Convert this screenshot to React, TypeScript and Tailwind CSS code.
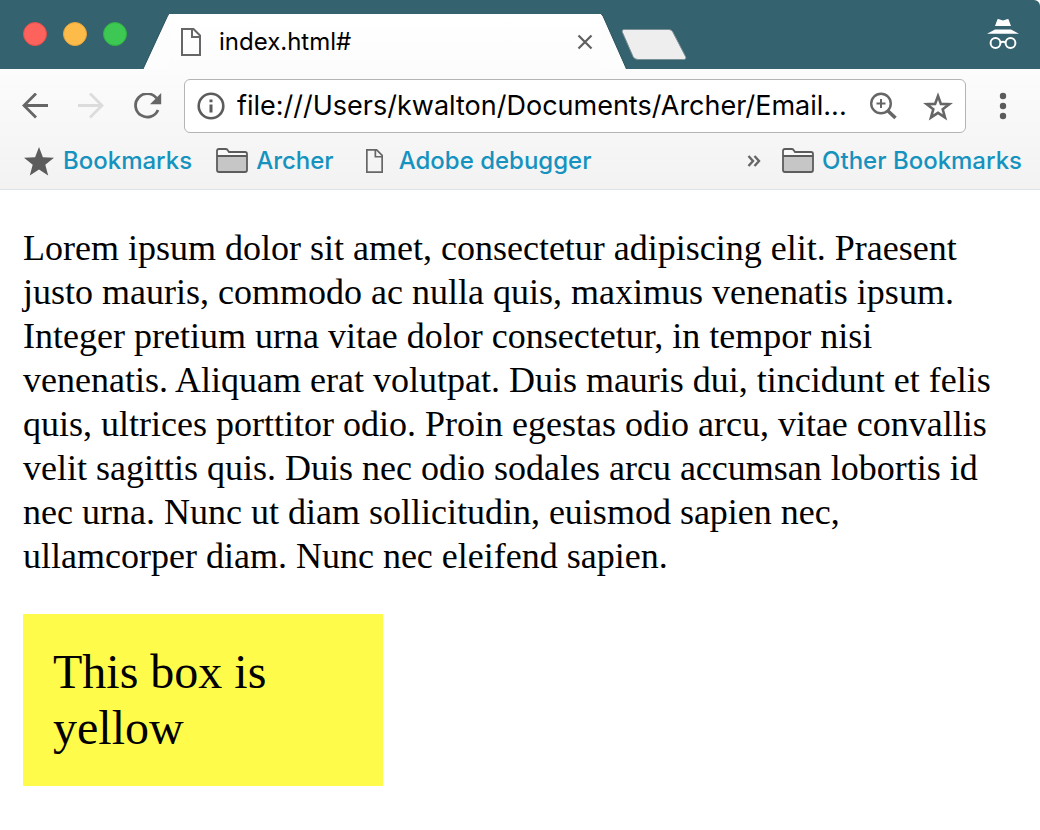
import React from "react";

function PageIcon({ className }: { className: string }) {
  return (
    <svg viewBox="0 0 20 28" fill="none" stroke="#666" strokeWidth="2" className={className} aria-hidden="true">
      <path d="M1 1H12.5L19 7.5V27H1Z" />
      <path d="M11 1V9H19" />
    </svg>
  );
}

function FolderIcon() {
  return (
    <svg viewBox="0 0 32 26" className="h-[26px] w-8 shrink-0" aria-hidden="true">
      <path d="M1 7.500H31V22Q31 24 29 24H3Q1 24 1 22Z" fill="#c6c6c6" />
      <path d="M1 3Q1 1 3 1H10L13 4H29Q31 4 31 6V7.500H1Z" fill="#fafafa" />
      <path
        d="M1 22V3Q1 1 3 1H9.500Q11 1 11.600 2L13 4H29Q31 4 31 6V22Q31 24 29 24H3Q1 24 1 22ZM1 8H31"
        fill="none"
        stroke="#5c5c5c"
        strokeWidth="1.800"
      />
    </svg>
  );
}

const starPath = "M15 0L18.900 10.300L30 10.800L21.300 17.700L24.200 28.500L15 22.400L5.800 28.500L8.700 17.700L0 10.800L11.100 10.300Z";

function TabStrip() {
  return (
    <div className="flex h-[69px] items-end bg-[#34626e]">
      <div className="flex w-[143px] shrink-0 gap-4 self-stretch pt-[22px] pl-[23px]">
        <button aria-label="Close window" className="size-6 rounded-full border border-[#e2504b] bg-[#fd625c]" />
        <button aria-label="Minimize window" className="size-6 rounded-full border border-[#e5a33c] bg-[#fdbc4a]" />
        <button aria-label="Zoom window" className="size-6 rounded-full border border-[#2fb241] bg-[#3cc852]" />
      </div>
      <div className="flex h-[55px] w-[484px]">
        <svg viewBox="0 0 26 55" className="h-full w-[26px] shrink-0" aria-hidden="true">
          <path d="M0 55L24.500 2Q25.400 0 27 0V55Z" fill="#fdfdfd" />
          <path d="M0 55L24.500 2Q25.400 0 27 0" fill="none" stroke="#28525d" />
        </svg>
        <div className="flex min-w-0 flex-1 items-center bg-linear-to-b from-white to-[#fcfcfc] pl-3">
          <PageIcon className="h-7 w-5 shrink-0" />
          <span className="ml-[18px] flex-1 text-2xl leading-8 whitespace-nowrap">index.html#</span>
          <button aria-label="Close tab" className="mr-2 grid size-4">
            <svg viewBox="0 0 16 16" stroke="#5f5f5f" strokeWidth="2.200" aria-hidden="true">
              <path d="M1.500 1.500L14.500 14.500M14.500 1.500L1.500 14.500" />
            </svg>
          </button>
        </div>
        <svg viewBox="0 0 26 55" className="h-full w-[26px] shrink-0" aria-hidden="true">
          <path d="M-1 0Q1 0 2 2L25.500 55H-1Z" fill="#fdfdfd" />
          <path d="M-1 0Q1 0 2 2L25.500 55" fill="none" stroke="#28525d" />
        </svg>
      </div>
      <button aria-label="New tab" className="mb-2 -ml-[7px]">
        <svg viewBox="0 0 68 32" className="h-8 w-[68px]" aria-hidden="true">
          <path
            d="M4.500 0.500H49Q51.500 0.500 52.800 3L65.500 27.500Q66.800 30.500 63.500 30.500H18Q14.500 30.500 13 27.500L2.500 3.500Q1.300 0.500 4.500 0.500Z"
            fill="#eee"
            stroke="#7b9096"
          />
        </svg>
      </button>
      <div className="ml-auto self-stretch pt-[19px] pr-[21px]">
        <svg viewBox="0 0 32 30" className="h-[30px] w-8" aria-label="Incognito" role="img">
          <path d="M10.500 0.300Q11 -0.200 12 0.200L16 1.500L20 0.200Q21 -0.200 21.500 0.300L24 7H8Z" fill="#fff" />
          <path d="M8 10.500H24L32 14.800H0Z" fill="#fff" />
          <g fill="none" stroke="#fff" strokeWidth="2">
            <circle cx="8.500" cy="24" r="4.900" />
            <circle cx="23.500" cy="24" r="4.900" />
            <path d="M13.300 23.500Q16 22 18.700 23.500" />
          </g>
        </svg>
      </div>
    </div>
  );
}

function Toolbar() {
  return (
    <div className="flex items-center pt-[10px] pr-[33px] pl-[22px]">
      <button aria-label="Back">
        <svg viewBox="0 0 26 26" className="size-[26px]" fill="none" stroke="#666" strokeWidth="2.800" aria-hidden="true">
          <path d="M26 12.500H2M14 0.500L2 12.500L14 24.500" />
        </svg>
      </button>
      <button aria-label="Forward" className="ml-[30px]">
        <svg viewBox="0 0 26 26" className="size-[26px]" fill="none" stroke="#dcdcdc" strokeWidth="2.800" aria-hidden="true">
          <path d="M0 12.500H24M12 0.500L24 12.500L12 24.500" />
        </svg>
      </button>
      <button aria-label="Reload" className="ml-[30px]">
        <svg viewBox="0 0 28 26" className="h-[26px] w-7" aria-hidden="true">
          <path d="M22.500 5.200A11.700 11.700 0 1 0 24 17" fill="none" stroke="#666" strokeWidth="2.800" />
          <path d="M27.200 0V11.300H16Z" fill="#666" />
        </svg>
      </button>
      <div className="ml-[22px] flex h-[54px] min-w-0 flex-1 items-center rounded-md border border-[#b4b4b4] bg-white px-3">
        <svg viewBox="0 0 28 28" className="size-7 shrink-0" aria-hidden="true">
          <circle cx="14" cy="14" r="12.300" fill="none" stroke="#5c5c5c" strokeWidth="2.600" />
          <path d="M12.500 7.500H15.500V10.300H12.500ZM12.500 12.500H15.500V20.500H12.500Z" fill="#5c5c5c" />
        </svg>
        <input
          aria-label="Address"
          className="ml-3 min-w-0 flex-1 bg-transparent text-[27px] leading-8 outline-none"
          defaultValue="file:///Users/kwalton/Documents/Archer/Email..."
        />
        <button aria-label="Zoom">
          <svg viewBox="0 0 28 28" className="size-7" fill="none" stroke="#666" aria-hidden="true">
            <circle cx="12" cy="11.500" r="9.800" strokeWidth="2.400" />
            <path d="M12 7V16M7.500 11.500H16.500" strokeWidth="2" />
            <path d="M18.500 18.500L26.500 26" strokeWidth="3.600" />
          </svg>
        </button>
        <button aria-label="Bookmark this page" className="ml-[26px]">
          <svg viewBox="0 0 30 29" className="h-[29px] w-[30px]" aria-hidden="true">
            <path
              d="M15 4L17.900 11.900L26.300 12.200L19.700 17.300L22 25.400L15 20.800L8 25.400L10.300 17.300L3.700 12.200L12.100 11.900Z"
              fill="none"
              stroke="#666"
              strokeWidth="2.600"
            />
          </svg>
        </button>
      </div>
      <button aria-label="Menu" className="ml-[33px]">
        <svg viewBox="0 0 8 28" className="h-7 w-2" fill="#5c5c5c" aria-hidden="true">
          <circle cx="4" cy="4" r="3.200" />
          <circle cx="4" cy="14" r="3.200" />
          <circle cx="4" cy="24" r="3.200" />
        </svg>
      </button>
    </div>
  );
}

function BookmarksBar() {
  return (
    <nav className="flex h-14 items-center pr-[18px] pl-6 text-2xl leading-8 font-medium whitespace-nowrap text-[#1692bf]">
      <a href="#bookmarks" className="flex items-center gap-[9px]">
        <svg viewBox="0 0 30 29" className="h-[29px] w-[30px]" fill="#5c5c5c" aria-hidden="true">
          <path d={starPath} />
        </svg>
        Bookmarks
      </a>
      <a href="#archer" className="ml-6 flex items-center gap-2">
        <FolderIcon />
        Archer
      </a>
      <a href="#adobe" className="ml-8 flex items-center gap-4">
        <PageIcon className="h-6 w-[17px]" />
        Adobe debugger
      </a>
      <button aria-label="More bookmarks" className="ml-auto">
        <svg viewBox="0 0 14 12" className="h-3 w-3.5" fill="none" stroke="#666" strokeWidth="2.400" aria-hidden="true">
          <path d="M1.500 1L6 6L1.500 11M7.500 1L12 6L7.500 11" />
        </svg>
      </button>
      <a href="#other" className="ml-[21px] flex items-center gap-2">
        <FolderIcon />
        Other Bookmarks
      </a>
    </nav>
  );
}

export default function App() {
  return (
    <div className="min-h-screen overflow-hidden rounded-tr-md bg-white font-['Inter',sans-serif] text-black">
      <header>
        <TabStrip />
        <div className="border-b border-[#dbe3e8] bg-linear-to-b from-[#fcfcfc] to-[#f2f2f2]">
          <Toolbar />
          <BookmarksBar />
        </div>
      </header>
      <main className="px-[23px] pt-9 font-['Liberation_Serif',serif]">
        <p className="text-4xl leading-[44px]">
          Lorem ipsum dolor sit amet, consectetur adipiscing elit. Praesent justo mauris, commodo ac nulla quis, maximus
          venenatis ipsum. Integer pretium urna vitae dolor consectetur, in tempor nisi venenatis. Aliquam erat volutpat.
          Duis mauris dui, tincidunt et felis quis, ultrices porttitor odio. Proin egestas odio arcu, vitae convallis
          velit sagittis quis. Duis nec odio sodales arcu accumsan lobortis id nec urna. Nunc ut diam sollicitudin,
          euismod sapien nec, ullamcorper diam. Nunc nec eleifend sapien.
        </p>
        <div className="mt-9 w-[360px] bg-[#fffb4b] p-[30px] text-5xl leading-[56px]">This box is yellow</div>
      </main>
    </div>
  );
}
